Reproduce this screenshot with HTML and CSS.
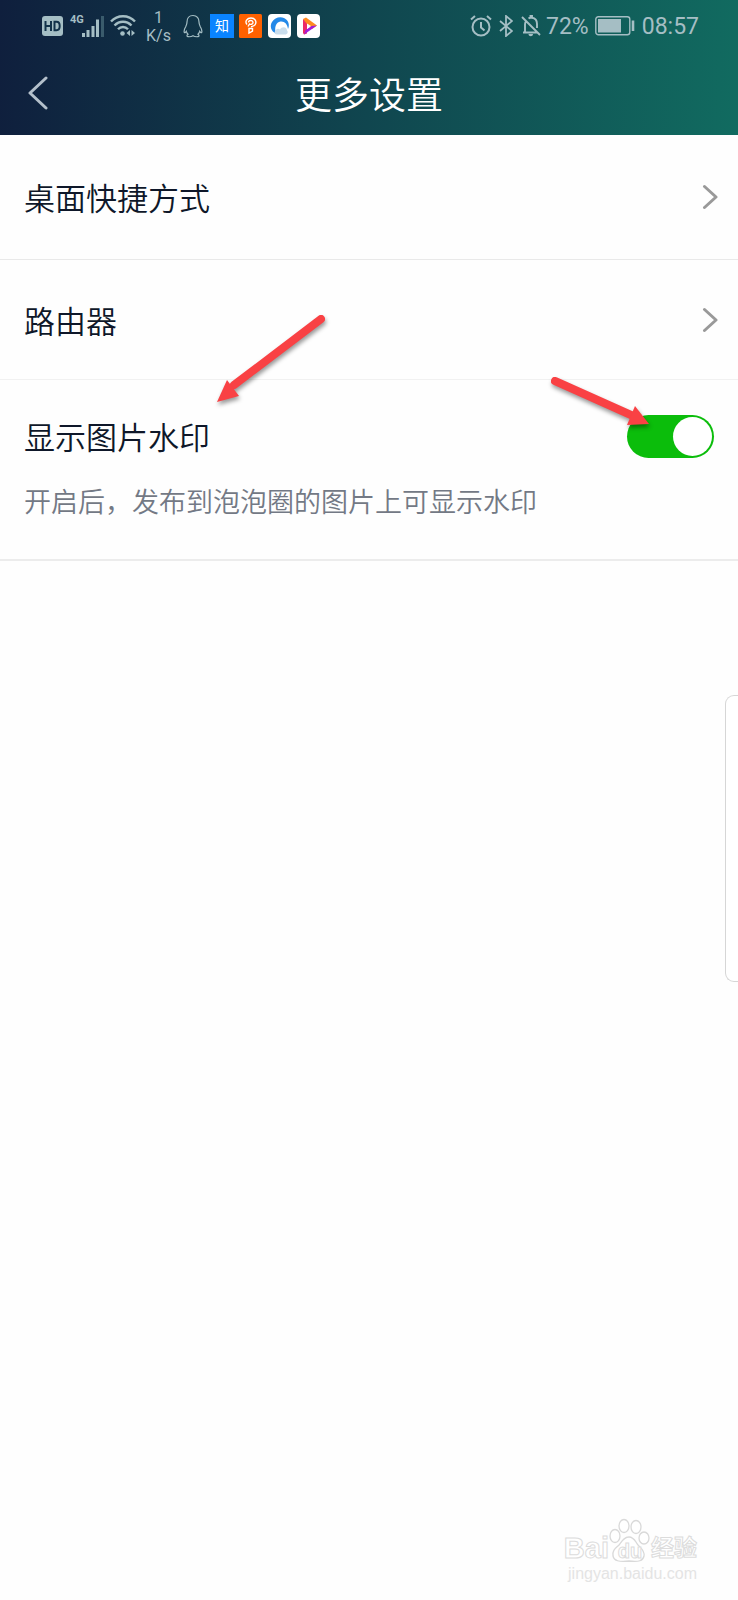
FILE: index.html
```html
<!DOCTYPE html>
<html lang="zh-CN">
<head>
<meta charset="utf-8">
<meta name="viewport" content="width=device-width, initial-scale=1">
<title>更多设置</title>
<link rel="stylesheet" href="styles.css">
</head>
<body>
<div class="page">
  <header class="header">
    <div class="status">
      <div class="status-group">
        <svg class="hd" width="22" height="22" viewBox="0 0 22 22" aria-hidden="true">
          <rect x="0" y="1" width="21" height="20" rx="3" fill="currentColor"/>
          <path d="M3.500 6v10M9 6v10M3.500 11H9M12.500 6.800v8.400h2c2.300 0 3.200-1.700 3.200-4.200s-.9-4.200-3.200-4.200z" fill="none" stroke="#12324a" stroke-width="2"/>
        </svg>
        <span class="net">4G</span>
        <svg class="signal" width="23" height="22" viewBox="0 0 23 22" aria-hidden="true">
          <path d="M1.500 18v4M6 15v7M11 11v11M15.500 4.500V22" stroke="currentColor" stroke-width="3"/>
          <path d="M20.500 1v21" stroke="#3a5b6c" stroke-width="3"/>
        </svg>
        <svg class="wifi" width="26" height="22" viewBox="0 0 26 22" aria-hidden="true">
          <g fill="none" stroke="currentColor" stroke-width="2.400">
            <path d="M1 6.500C7.500-.5 18.500-.5 25 6.500"/>
            <path d="M4.500 10.500c4.800-5 12.200-5 17 0"/>
            <path d="M8 14.300c2.800-3 7.200-3 10 0"/>
          </g>
          <circle cx="12.500" cy="18.500" r="2.300" fill="currentColor"/>
          <path d="M20 15v6l-3.500-3zM21.500 15v6l3.500-3z" fill="currentColor"/>
        </svg>
        <span class="speed"><span>1</span><span>K/s</span></span>
        <svg class="qq" width="20" height="24" viewBox="0 0 20 24" aria-hidden="true">
          <path d="M10 1.500c-4 0-6 3-6 6.500 0 2-.3 2.800-1.200 4.500C1.300 15 .8 17 1.300 18.500c.6.500 1.500-.3 2-1.200.3 1.200.8 2 1.700 2.900-1.200.6-1.500 2.300.2 2.500 1.800.2 3.600-.2 4.800-1 1.200.8 3 1.200 4.800 1 1.700-.2 1.400-1.900.2-2.500.9-.9 1.400-1.700 1.700-2.900.5.900 1.400 1.700 2 1.200.5-1.500 0-3.500-1.500-6C16.300 10.800 16 10 16 8c0-3.500-2-6.500-6-6.500z" fill="none" stroke="currentColor" stroke-width="1.200"/>
        </svg>
        <span class="app zhihu">知</span>
        <svg class="app" width="24" height="24" viewBox="0 0 24 24" aria-hidden="true">
          <rect width="23" height="24" rx="1.500" fill="#ff6100"/>
          <path d="M8 10.500C5.500 7.500 8 4 12 4s6 3.500 4.200 6.500c-1 1.800-3 2-4.200 2.300M9.500 8.500c0-2.500 4.500-2.800 4.500 0 0 2-2.500 2.200-3.500 1.500L9 12.500M10 14.500h3.500v2.500l-3.500 2z" fill="none" stroke="#fff" stroke-width="1.400"/>
        </svg>
        <svg class="app" width="24" height="24" viewBox="0 0 24 24" aria-hidden="true">
          <rect width="23" height="24" rx="4" fill="#fff"/>
          <path d="M8 19.500C3 17.500 1.500 12 4 8s7.500-6 12-4 6 7 4 11c-.5-5-3.500-8-7.500-7.500-4.500.5-6.500 6-4.500 12z" fill="#2489e8"/>
          <path d="M6.500 18.500c1-4 4-4.500 5.500-3 1.500-3.500 7-3 7 1 1.500 1.500.5 4-2 4H9c-1.500 0-2.500-1-2.500-2z" fill="#c9ddec"/>
        </svg>
        <svg class="app" width="24" height="24" viewBox="0 0 24 24" aria-hidden="true">
          <rect width="23" height="24" rx="4" fill="#fff"/>
          <path d="M6 5l3-1.500L20 11.500 15 15l-6-4.500z" fill="#ff8a1f"/>
          <path d="M6 5l4 5v9.500L7 20.500 6 19z" fill="#ec2a66"/>
          <path d="M7 20.500l13-9-5.500.5L8.500 16z" fill="#a31cd8"/>
          <path d="M10 9.500l4 2.500-4 3z" fill="#fff"/>
        </svg>
      </div>
      <div class="status-group">
        <svg class="alarm" width="22" height="22" viewBox="0 0 22 22" aria-hidden="true">
          <g fill="none" stroke="currentColor" stroke-width="2">
            <circle cx="11" cy="12" r="8.500"/>
            <path d="M11 7v5.500l3.500 3M1 4.500L5 1M21 4.500L17 1"/>
          </g>
        </svg>
        <svg class="bt" width="14" height="22" viewBox="0 0 14 22" aria-hidden="true">
          <path d="M1 6l12 10-6 5V1l6 5L1 16" fill="none" stroke="currentColor" stroke-width="1.800"/>
        </svg>
        <svg class="bell" width="20" height="22" viewBox="0 0 20 22" aria-hidden="true">
          <g fill="none" stroke="currentColor" stroke-width="1.900">
            <path d="M1 2l18 18M2 17.500h14M4 16.500V9.500c0-1.400.4-2.600 1-3.500M7.500 3.500c1-.7 1.800-.7 2-.7V1h1.500v1.800c3.500.5 5 3.200 5 6.200v4"/>
          </g>
          <path d="M7.500 19h4.500c0 3-4.500 3-4.500 0z" fill="currentColor"/>
        </svg>
        <span class="num">72%</span>
        <svg class="battery" width="40" height="20" viewBox="0 0 40 20" aria-hidden="true">
          <rect x=".8" y=".8" width="34" height="18" rx="2.500" fill="none" stroke="currentColor" stroke-width="1.400"/>
          <rect x="3" y="3" width="23" height="13.500" fill="currentColor"/>
          <path d="M38 4.500v10.500" stroke="currentColor" stroke-width="2.600"/>
        </svg>
        <time class="num">08:57</time>
      </div>
    </div>
    <div class="titlebar">
      <button class="back" type="button" aria-label="返回">
        <svg width="20" height="34" viewBox="0 0 20 34" aria-hidden="true">
          <path d="M18 2L2 17l16 15" fill="none" stroke="currentColor" stroke-width="3" stroke-linecap="round" stroke-linejoin="round"/>
        </svg>
      </button>
      <h1 class="title">更多设置</h1>
    </div>
  </header>

  <main class="list">
    <a class="row row-first" href="#shortcut">
      <span class="label">桌面快捷方式</span>
      <svg class="chevron" width="16" height="26" viewBox="0 0 16 26" aria-hidden="true"><path d="M2.500 2.500L14 13 2.500 23.500" fill="none" stroke="currentColor" stroke-width="3" stroke-linecap="round" stroke-linejoin="round"/></svg>
    </a>
    <a class="row row-second" href="#router">
      <span class="label">路由器</span>
      <svg class="chevron" width="16" height="26" viewBox="0 0 16 26" aria-hidden="true"><path d="M2.500 2.500L14 13 2.500 23.500" fill="none" stroke="currentColor" stroke-width="3" stroke-linecap="round" stroke-linejoin="round"/></svg>
    </a>
    <div class="setting">
      <div class="setting-head">
        <label class="label" for="watermark">显示图片水印</label>
        <input class="switch" id="watermark" type="checkbox" role="switch" aria-describedby="watermark-note" checked>
      </div>
      <p class="note" id="watermark-note">开启后，发布到泡泡圈的图片上可显示水印</p>
      <svg class="arrow arrow-left" width="120" height="96" viewBox="0 0 120 96" aria-hidden="true">
        <path d="M111 9L24 75" stroke="#f94144" stroke-width="8" stroke-linecap="round"/>
        <path d="M7 92L17 70l12 16z" fill="#f94144"/>
      </svg>
      <svg class="arrow arrow-right" width="110" height="64" viewBox="0 0 110 64" aria-hidden="true">
        <path d="M9 11l76 34" stroke="#f94144" stroke-width="8" stroke-linecap="round"/>
        <path d="M103 54L89 36l-8 19z" fill="#f94144"/>
      </svg>
    </div>
  </main>

  <aside class="drawer" aria-label="侧边栏"></aside>

  <footer class="mark">
    <div class="mark-brand">
      <span class="mark-bai">Bai</span>
      <span class="mark-paw">
        <svg width="42" height="46" viewBox="0 0 42 46" aria-hidden="true">
          <g fill="#fff" stroke="#d9d9d9" stroke-width="1.300">
            <ellipse cx="6" cy="18" rx="5" ry="6.500"/>
            <ellipse cx="15" cy="8" rx="5" ry="6.500"/>
            <ellipse cx="27" cy="9" rx="5" ry="6.500"/>
            <ellipse cx="35" cy="20" rx="5" ry="6"/>
            <path d="M20 19c-5 0-7 4-10 8-3 3-7 5-6 11 1 5 6 6 16 5 10 1 14 0 15-5s-3-8-6-11c-3-4-4-8-9-8z"/>
          </g>
        </svg>
        <span class="mark-du">du</span>
      </span>
      <span class="mark-cn">经验</span>
    </div>
    <div class="mark-url">jingyan.baidu.com</div>
  </footer>
</div>
</body>
</html>
```

FILE: styles.css
```css
* {
  box-sizing: border-box;
}

body {
  margin: 0;
  background: #fefefe;
  color: #0e1729;
  font-family: Roboto, "Noto Sans CJK SC", sans-serif;
  font-weight: 300;
}

.page {
  position: relative;
  display: flex;
  flex-direction: column;
  min-height: 100vh;
  overflow: hidden;
}

.header {
  background: linear-gradient(92deg, #0f1f3d 0%, #10464f 50%, #116b60 100%);
  padding-bottom: 12px;
}

/* Status bar */
.status {
  display: flex;
  justify-content: space-between;
  height: 52px;
  padding: 0 39px 0 42px;
  color: #a5bec4;
}

.status-group {
  display: flex;
  align-items: center;
}

.net {
  align-self: flex-start;
  margin: 12px 0 0 6px;
  width: 12px;
  font-family: Roboto, sans-serif;
  font-size: 11px;
  font-weight: 700;
  line-height: 16px;
}

.signal {
  margin-right: 5px;
}

.speed {
  display: flex;
  flex-direction: column;
  align-items: center;
  margin: 0 12px 0 10px;
  padding-top: 2px;
  font-size: 16px;
  font-weight: 400;
  line-height: 18px;
}

.qq {
  margin-right: 7px;
}

.app {
  width: 24px;
  height: 24px;
  margin-right: 5px;
}

.zhihu {
  background: #0a84ff;
  color: #fff;
  font-size: 14px;
  font-weight: 400;
  line-height: 24px;
  text-align: center;
}

.bt {
  margin: 0 8px 0 7px;
}

.bell {
  margin-right: 5px;
}

.num {
  padding-top: 2px;
  font-size: 23px;
  font-weight: 400;
  line-height: 28px;
}

.battery {
  margin: 0 7px 0 6px;
}

/* Title bar */
.titlebar {
  display: grid;
  grid-template-columns: 80px 1fr 80px;
  align-items: center;
  min-height: 71px;
  padding-top: 12px;
}

.back {
  justify-self: start;
  display: flex;
  margin: 0;
  padding: 0 28px 2px;
  border: 0;
  background: none;
  color: #b4c0cb;
}

.title {
  margin: 0;
  padding-top: 6px;
  color: #fff;
  font-size: 37px;
  font-weight: 350;
  line-height: 48px;
  text-align: center;
}

/* Settings list */
.row {
  display: flex;
  align-items: center;
  justify-content: space-between;
  padding: 0 20px 0 24px;
  border-bottom: 1px solid #e9e9e9;
  color: inherit;
  text-decoration: none;
}

.row-first {
  min-height: 125px;
}

.row-second {
  min-height: 120px;
  border-color: #f1f1f1;
}

.label {
  padding-top: 6px;
  font-size: 31px;
  font-weight: 350;
  line-height: 44px;
}

.chevron {
  color: #999;
}

.setting {
  position: relative;
  padding: 31px 24px 38px;
  border-bottom: 2px solid #ececec;
}

.setting-head {
  display: flex;
  align-items: center;
  justify-content: space-between;
}

.switch {
  appearance: none;
  display: flex;
  align-items: center;
  justify-content: flex-end;
  width: 87px;
  height: 43px;
  margin: 0;
  padding: 2px;
  border-radius: 22px;
  background: #0bbd0b;
}

.switch::before {
  content: "";
  width: 39px;
  height: 39px;
  border-radius: 50%;
  background: #fff;
}

.switch:not(:checked) {
  justify-content: flex-start;
  background: #ccc;
}

.note {
  margin: 24px 0 0;
  color: #737985;
  font-size: 27px;
  font-weight: 350;
  line-height: 36px;
}

/* Pointers drawn over the list */
.arrow {
  position: absolute;
  filter: drop-shadow(1px 3px 2px rgba(0, 0, 0, 0.4));
  pointer-events: none;
}

.arrow-left {
  top: -70px;
  left: 210px;
}

.arrow-right {
  top: -10px;
  right: 82px;
}

/* Drawer peeking in from the right edge */
.drawer {
  position: absolute;
  top: 695px;
  right: 0;
  width: 13px;
  height: 287px;
  border: 1px solid #d6d6d6;
  border-right: 0;
  border-radius: 9px 0 0 9px;
  background: #fff;
}

/* Corner mark */
.mark {
  align-self: flex-end;
  margin: auto 41px 16px 0;
  color: #fff;
  font-family: "Liberation Sans", "Noto Sans CJK SC", sans-serif;
  font-weight: 700;
  -webkit-text-stroke: 1px #dcdcdc;
}

.mark-brand {
  display: flex;
  align-items: flex-end;
  justify-content: space-between;
  height: 46px;
}

.mark-bai {
  font-size: 29px;
  line-height: 32px;
}

.mark-paw {
  display: grid;
  place-items: end center;
}

.mark-paw > * {
  grid-area: 1 / 1;
}

.mark-du {
  font-size: 20px;
  line-height: 26px;
}

.mark-cn {
  font-size: 23px;
  line-height: 32px;
}

.mark-url {
  color: #e4e4e4;
  font-size: 16px;
  font-weight: 400;
  line-height: 20px;
  text-align: right;
  -webkit-text-stroke: 0;
}
```
